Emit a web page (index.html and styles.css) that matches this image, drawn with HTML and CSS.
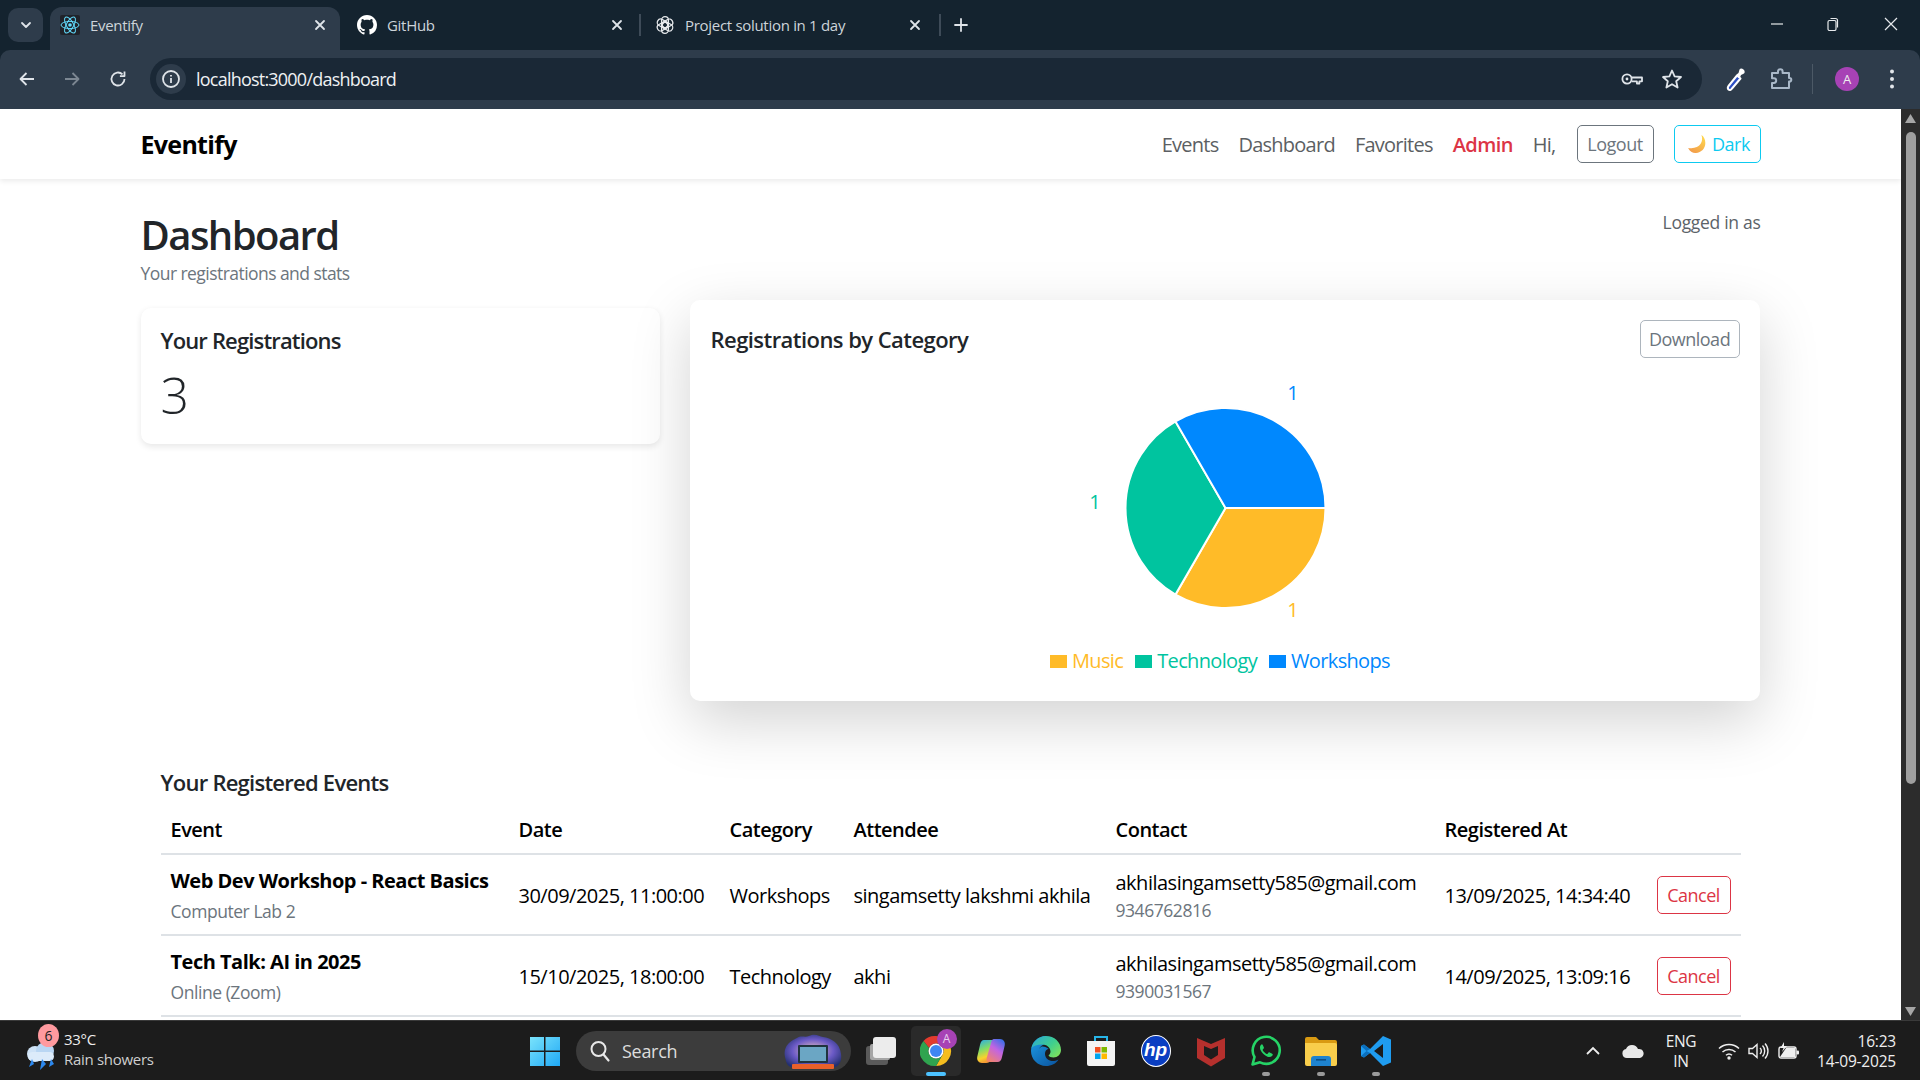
FILE: index.html
```html
<!DOCTYPE html>
<html lang="en">
<head>
<meta charset="utf-8">
<title>Eventify</title>
<link rel="stylesheet" href="styles.css">
</head>
<body>
<div class="screen">
  <header class="browser">
    <div class="tabstrip">
      <button class="tab-menu"><svg width="14" height="14" viewBox="0 0 14 14"><path d="M3 5l4 4 4-4" class="ic-w"/></svg></button>
      <div class="tab tab-active">
        <svg class="fav" width="20" height="20" viewBox="0 0 20 20"><rect width="20" height="20" rx="2" fill="#20232a"/><g fill="none" stroke="#61dafb" stroke-width="1"><ellipse cx="10" cy="10" rx="9" ry="3.6"/><ellipse cx="10" cy="10" rx="9" ry="3.6" transform="rotate(60 10 10)"/><ellipse cx="10" cy="10" rx="9" ry="3.6" transform="rotate(120 10 10)"/></g><circle cx="10" cy="10" r="1.8" fill="#61dafb"/></svg>
        <span class="tab-title">Eventify</span>
        <svg class="tab-x" width="12" height="12" viewBox="0 0 12 12"><path d="M2 2l8 8M10 2l-8 8" class="ic-w"/></svg>
      </div>
      <div class="tab tab-second">
        <svg class="fav" width="20" height="20" viewBox="0 0 16 16"><path fill="#fff" d="M8 0C3.58 0 0 3.58 0 8c0 3.54 2.29 6.53 5.47 7.59.4.07.55-.17.55-.38 0-.19-.01-.82-.01-1.49-2.01.37-2.53-.49-2.69-.94-.09-.23-.48-.94-.82-1.13-.28-.15-.68-.52-.01-.53.63-.01 1.08.58 1.23.82.72 1.21 1.87.87 2.33.66.07-.52.28-.87.51-1.07-1.78-.2-3.64-.89-3.64-3.95 0-.87.31-1.59.82-2.15-.08-.2-.36-1.02.08-2.12 0 0 .67-.21 2.2.82.64-.18 1.32-.27 2-.27.68 0 1.36.09 2 .27 1.53-1.04 2.2-.82 2.2-.82.44 1.1.16 1.92.08 2.12.51.56.82 1.27.82 2.15 0 3.07-1.87 3.75-3.65 3.95.29.25.54.73.54 1.48 0 1.07-.01 1.93-.01 2.2 0 .21.15.46.55.38A8.013 8.013 0 0016 8c0-4.42-3.58-8-8-8z"/></svg>
        <span class="tab-title">GitHub</span>
        <svg class="tab-x" width="12" height="12" viewBox="0 0 12 12"><path d="M2 2l8 8M10 2l-8 8" class="ic-w"/></svg>
      </div>
      <div class="tab-sep"></div>
      <div class="tab tab-third">
        <svg class="fav" width="20" height="20" viewBox="0 0 20 20"><g fill="none" stroke="#e6e9ec" stroke-width="1.3"><rect x="6.6" y="1.6" width="6.8" height="11" rx="3.4"/><rect x="6.6" y="1.6" width="6.8" height="11" rx="3.4" transform="rotate(60 10 10)"/><rect x="6.6" y="1.6" width="6.8" height="11" rx="3.4" transform="rotate(120 10 10)"/><rect x="6.6" y="1.6" width="6.8" height="11" rx="3.4" transform="rotate(180 10 10)"/><rect x="6.6" y="1.6" width="6.8" height="11" rx="3.4" transform="rotate(240 10 10)"/><rect x="6.6" y="1.6" width="6.8" height="11" rx="3.4" transform="rotate(300 10 10)"/></g></svg>
        <span class="tab-title">Project solution in 1 day</span>
        <svg class="tab-x" width="12" height="12" viewBox="0 0 12 12"><path d="M2 2l8 8M10 2l-8 8" class="ic-w"/></svg>
      </div>
      <div class="tab-sep"></div>
      <svg class="tab-plus" width="14" height="14" viewBox="0 0 14 14"><path d="M7 1v12M1 7h12" class="ic-w"/></svg>
      <div class="win-controls">
        <svg width="14" height="14" viewBox="0 0 14 14"><path d="M1 7h12" class="ic-thin"/></svg>
        <svg width="14" height="14" viewBox="0 0 14 14"><rect x="2" y="3.5" width="8" height="10" rx="1.5" class="ic-thin"/><path d="M4.5 1.5h5a2 2 0 012 2v7" class="ic-thin"/></svg>
        <svg class="win-close" width="14" height="14" viewBox="0 0 14 14"><path d="M1 1l12 12M13 1L1 13" class="ic-thin"/></svg>
      </div>
    </div>
    <div class="toolbar">
      <svg class="tb-back" width="20" height="20" viewBox="0 0 20 20"><path d="M17 10H4M9.5 4L3.5 10l6 6" class="ic-t"/></svg>
      <svg class="tb-forward" width="20" height="20" viewBox="0 0 20 20"><path d="M3 10h13M10.5 4l6 6-6 6" class="ic-t ic-dim"/></svg>
      <svg class="tb-reload" width="20" height="20" viewBox="0 0 20 20"><path d="M16.5 10a6.5 6.5 0 11-2-4.7" class="ic-t"/><path d="M16.5 2.5v4.6h-4.6" class="ic-t"/></svg>
      <div class="omnibox">
        <span class="info-chip"><svg width="20" height="20" viewBox="0 0 20 20"><circle cx="10" cy="10" r="8" class="ic-t"/><path d="M10 9v5M10 6v1.4" class="ic-t"/></svg></span>
        <span class="url">localhost:3000/dashboard</span>
        <svg class="omni-key" width="24" height="20" viewBox="0 0 24 20"><circle cx="7" cy="10" r="4.6" class="ic-t"/><circle cx="7" cy="10" r="1.4" fill="#dfe4e9"/><path d="M11.6 8.5H22v3.8h-2.6v2.2h-2.5v-2.2h-5.3" class="ic-t"/></svg>
        <svg class="omni-star" width="22" height="22" viewBox="0 0 22 22"><path d="M11 2.5l2.6 5.9 6.4.6-4.8 4.2 1.4 6.3L11 16.2l-5.6 3.3 1.4-6.3L2 9l6.4-.6z" class="ic-t"/></svg>
      </div>
      <svg class="tb-pen" width="22" height="26" viewBox="0 0 22 26"><path d="M3.500 23.500c-1-1-1-2 0-3.500L12 9.500l3.500 3L7 22.500c-1 1.500-2.500 2-3.500 1z" fill="#2c4fc4" stroke="#fff" stroke-width="2" stroke-linejoin="round"/><path d="M11.500 8.500l2-1.500 1-3.500c.8-1.500 2.500-1.500 4 0s1.500 3 .5 4l-3 1.500-1 2.500z" fill="#fff"/></svg>
      <svg class="tb-ext" width="24" height="24" viewBox="0 0 24 24"><path d="M3 6h6V4.500a2.300 2.300 0 014.600 0V6H20v5h.5a1.800 1.800 0 010 3.600H20V21H3v-5h1.800a2.400 2.400 0 000-4.800H3z" fill="none" stroke="#a9b8c8" stroke-width="2" stroke-linejoin="round"/></svg>
      <div class="tb-sep"></div>
      <span class="avatar">A</span>
      <svg class="tb-dots" width="6" height="22" viewBox="0 0 6 22"><circle cx="3" cy="3.5" r="2" fill="#e2e6ea"/><circle cx="3" cy="11" r="2" fill="#e2e6ea"/><circle cx="3" cy="18.5" r="2" fill="#e2e6ea"/></svg>
    </div>
  </header>

  <div class="viewport">
    <div class="page">
      <nav class="navbar">
        <div class="container nav-inner">
          <a class="brand">Eventify</a>
          <div class="nav-links">
            <a class="nav-link">Events</a>
            <a class="nav-link">Dashboard</a>
            <a class="nav-link">Favorites</a>
            <a class="nav-link nav-admin">Admin</a>
            <span class="nav-link">Hi,</span>
            <button class="btn btn-gray nav-logout">Logout</button>
            <button class="btn btn-cyan nav-theme"><svg width="20" height="20" viewBox="0 0 18 18"><defs><linearGradient id="moon" x1="0.8" y1="0" x2="0.2" y2="1"><stop offset="0" stop-color="#ffd84d"/><stop offset="1" stop-color="#f29a4a"/></linearGradient></defs><path d="M13 1c2.2 6-1.5 12-9.5 11.8-1 0-1.7-.1-2.5-.3 1.5 3.2 4.3 4.7 7 4.5 5-.3 8.5-4.2 8.5-9 0-3-1.400-5.700-3.500-7z" fill="url(#moon)"/></svg>Dark</button>
          </div>
        </div>
      </nav>

      <main class="container main">
        <div class="head-row">
          <div>
            <h1 class="page-title">Dashboard</h1>
            <p class="page-sub">Your registrations and stats</p>
          </div>
          <p class="logged">Logged in as</p>
        </div>

        <div class="cards">
          <section class="card card-stat">
            <h2 class="card-title card-title-stat">Your Registrations</h2>
            <div class="stat-value">3</div>
          </section>
          <section class="card card-chart">
            <div class="chart-head">
              <h2 class="card-title">Registrations by Category</h2>
              <button class="btn btn-light">Download</button>
            </div>
            <svg class="pie" width="1030" height="272" viewBox="0 0 1030 272">
              <g stroke="#fff" stroke-width="2">
                <path d="M514.500 138 L614.500 138 A100 100 0 0 1 464.500 224.600 Z" fill="#FFBB28"/>
                <path d="M514.500 138 L464.500 224.600 A100 100 0 0 1 464.500 51.400 Z" fill="#00C49F"/>
                <path d="M514.500 138 L464.500 51.400 A100 100 0 0 1 614.500 138 Z" fill="#0088FE"/>
              </g>
              <text x="582" y="30" class="pie-label pl-blue">1</text>
              <text x="384" y="139" class="pie-label pl-teal">1</text>
              <text x="582" y="247" class="pie-label pl-yellow">1</text>
            </svg>
            <div class="legend">
              <span class="legend-item lg-yellow"><i class="swatch"></i>Music</span>
              <span class="legend-item lg-teal"><i class="swatch"></i>Technology</span>
              <span class="legend-item lg-blue"><i class="swatch"></i>Workshops</span>
            </div>
          </section>
        </div>

        <section class="events">
          <h2 class="card-title events-title">Your Registered Events</h2>
          <table class="table">
            <colgroup>
              <col class="c1"><col class="c2"><col class="c3"><col class="c4"><col class="c5"><col class="c6"><col class="c7">
            </colgroup>
            <thead>
              <tr><th>Event</th><th>Date</th><th>Category</th><th>Attendee</th><th>Contact</th><th>Registered At</th><th></th></tr>
            </thead>
            <tbody>
              <tr>
                <td><div class="ev-name">Web Dev Workshop - React Basics</div><div class="muted ev-sub">Computer Lab 2</div></td>
                <td>30/09/2025, 11:00:00</td>
                <td>Workshops</td>
                <td>singamsetty lakshmi akhila</td>
                <td><div>akhilasingamsetty585@gmail.com</div><div class="muted">9346762816</div></td>
                <td>13/09/2025, 14:34:40</td>
                <td class="td-action"><button class="btn btn-red">Cancel</button></td>
              </tr>
              <tr>
                <td><div class="ev-name">Tech Talk: AI in 2025</div><div class="muted ev-sub">Online (Zoom)</div></td>
                <td>15/10/2025, 18:00:00</td>
                <td>Technology</td>
                <td>akhi</td>
                <td><div>akhilasingamsetty585@gmail.com</div><div class="muted">9390031567</div></td>
                <td>14/09/2025, 13:09:16</td>
                <td class="td-action"><button class="btn btn-red">Cancel</button></td>
              </tr>
            </tbody>
          </table>
        </section>
      </main>
    </div>
    <div class="scrollbar">
      <svg width="19" height="20" viewBox="0 0 19 20"><path d="M9.500 5l5.500 9H4z" fill="#a6a6a6"/></svg>
      <div class="thumb"></div>
      <svg class="arrow-down" width="19" height="18" viewBox="0 0 19 18"><path d="M9.500 14L4 5h11z" fill="#a6a6a6"/></svg>
    </div>
  </div>

  <footer class="taskbar">
    <div class="tb-weather">
      <div class="wx-icon">
        <svg width="38" height="34" viewBox="0 0 38 34"><circle cx="13" cy="17" r="8" fill="#cfe3f7"/><circle cx="23" cy="14" r="9" fill="#b9d6f3"/><rect x="6" y="15" width="26" height="9" rx="4.500" fill="#dcebfa"/><path d="M10 22l-3 8 5-3zM20 22l-2 11 6-6zM29 22l-2 8 5-3z" fill="#2c88ee"/></svg>
        <span class="wx-badge">6</span>
      </div>
      <div class="wx-text"><div>33°C</div><div class="wx-sub">Rain showers</div></div>
    </div>
    <svg class="win-logo" width="30" height="30" viewBox="0 0 30 30"><defs><linearGradient id="w1" x1="0" y1="0" x2="1" y2="1"><stop offset="0" stop-color="#7ae3fb"/><stop offset="1" stop-color="#1fa8f5"/></linearGradient></defs><path fill="url(#w1)" d="M0 1h14v13.500H0zM15.500 1H30v13.500H15.500zM0 16h14v14H0zM15.500 16H30v14H15.500z"/></svg>
    <div class="search">
      <svg width="24" height="24" viewBox="0 0 24 24"><circle cx="10.500" cy="10" r="7" fill="none" stroke="#e8e8e8" stroke-width="2"/><path d="M15.500 15.500l5 6" stroke="#e8e8e8" stroke-width="2.200" stroke-linecap="round"/></svg>
      <span class="search-text">Search</span>
      <svg class="search-art" width="60" height="36" viewBox="0 0 60 36"><defs><radialGradient id="sa" cx="0.500" cy="0.500" r="0.600"><stop offset="0" stop-color="#f3c7c0"/><stop offset="0.600" stop-color="#6b5ac6"/><stop offset="1" stop-color="#23306f"/></radialGradient></defs><path d="M2 24C0 12 8 8 14 5c4-3 8 0 12-2 6-3 10 0 14 1 8 1 17 6 18 17 1 6-1 11-5 13H8C4 33 3 29 2 24z" fill="url(#sa)"/><rect x="15" y="12" width="30" height="18" rx="1" fill="#20343f"/><rect x="17" y="14" width="26" height="14" fill="#6ba6c4"/><rect x="9" y="31" width="42" height="5" rx="1" fill="#e8602a"/></svg>
    </div>
    <div class="tb-apps">
      <span class="app"><svg width="32" height="30" viewBox="0 0 32 30"><rect x="1" y="10" width="22" height="19" rx="3" fill="#5a5a5a"/><rect x="5" y="8" width="20" height="16" rx="2" fill="#a4a4a4"/><rect x="8" y="1" width="23" height="21" rx="3" fill="#ececec"/></svg></span>
      <span class="app app-active">
        <svg width="32" height="32" viewBox="0 0 32 32"><path d="M16 1a15 15 0 0113 7.500H16a7.500 7.500 0 00-6.900 4.500L3.500 6A15 15 0 0116 1z" fill="#e33b2e"/><path d="M29 8.500A15 15 0 0116 31l6.500-11.300A7.500 7.500 0 0022.500 12z" fill="#f5bd1f"/><path d="M3.500 6A15 15 0 0016 31l6.500-11.300a7.500 7.500 0 01-13.400-6.700z" fill="#2fa44f"/><circle cx="16" cy="16" r="7.500" fill="#fff"/><circle cx="16" cy="16" r="6" fill="#3f86f2"/></svg>
        <span class="chrome-badge">A</span>
        <i class="run run-blue"></i>
      </span>
      <span class="app"><svg width="30" height="30" viewBox="0 0 30 30"><defs><linearGradient id="cp1" x1="0" y1="0" x2="0.300" y2="1"><stop offset="0" stop-color="#27a9ee"/><stop offset="0.450" stop-color="#7fdc6a"/><stop offset="0.800" stop-color="#f8d22d"/><stop offset="1" stop-color="#f59a35"/></linearGradient><linearGradient id="cp2" x1="0.800" y1="0" x2="0.200" y2="1"><stop offset="0" stop-color="#3c6fe8"/><stop offset="0.450" stop-color="#c264e2"/><stop offset="1" stop-color="#f2846b"/></linearGradient></defs><path d="M8 4h8c3 0 4 1.500 3.300 4L15 23c-.9 3-2.500 4-5 4H6c-3.500 0-5.500-3-4.700-6.500L4 9c.7-3.200 2-5 4-5z" fill="url(#cp1)"/><path d="M18 3h6c3.500 0 5.500 3 4.700 6.500L26 21c-.7 3.200-2 5-4.500 5H14c-3 0-4-1.500-3.300-4L15 7c.6-2.500 1.500-4 3-4z" fill="url(#cp2)"/></svg></span>
      <span class="app"><svg width="32" height="32" viewBox="0 0 32 32"><defs><linearGradient id="ed1" x1="0" y1="0" x2="1" y2="0.800"><stop offset="0" stop-color="#2aa6d9"/><stop offset="0.600" stop-color="#3fcf8e"/><stop offset="1" stop-color="#7de05c"/></linearGradient><linearGradient id="ed2" x1="0" y1="0" x2="0.800" y2="1"><stop offset="0" stop-color="#1e9fe8"/><stop offset="1" stop-color="#0c59a4"/></linearGradient></defs><path d="M16 1C7.700 1 1 7.700 1 16s6.700 15 15 15c5.500 0 10-2.300 12.500-6.500-3 1.700-6 1.800-8 1.300-3.200-.8-5.500-3.800-5.500-7 0-2.500 1.300-4.300 3.500-5C15.500 12 13 11 11 12c-2 1-3 3-3 6 0-5 4-9 9-9z" fill="url(#ed2)"/><path d="M1.500 13C3.300 6 9 1 16 1c8.300 0 15 6.200 15 14 0 4.500-3.500 7.500-7.500 7.500-2.500 0-4.500-.8-5-2 1.200-1 2-2.300 2-3.800 0-4.500-4-7.200-8.500-7.200C7 9.500 3.300 10.800 1.500 13z" fill="url(#ed1)"/></svg></span>
      <span class="app"><svg width="30" height="32" viewBox="0 0 30 32"><path d="M9 7V2h12v5" fill="none" stroke="#27b5e8" stroke-width="2"/><path d="M1 6h28v23a2 2 0 01-2 2H3a2 2 0 01-2-2z" fill="#f4f4f4"/><rect x="9" y="12" width="5.500" height="5.500" fill="#f25022"/><rect x="15.500" y="12" width="5.500" height="5.500" fill="#7fba00"/><rect x="9" y="18.500" width="5.500" height="5.500" fill="#00a4ef"/><rect x="15.500" y="18.500" width="5.500" height="5.500" fill="#ffb900"/></svg></span>
      <span class="app"><span class="hp-logo">hp</span></span>
      <span class="app"><svg width="28" height="32" viewBox="0 0 28 32"><path d="M0 3l14 6 14-6v20l-14 8.500L0 23z" fill="#b5302d"/><path d="M7 11l7 3 7-3v9l-7 4.500L7 20z" fill="#1c1c1c"/></svg></span>
      <span class="app"><svg width="32" height="32" viewBox="0 0 32 32"><path d="M2.500 29.500l2-7.500a13.500 13.500 0 115.500 5.300z" fill="none" stroke="#25d366" stroke-width="2.600" stroke-linejoin="round"/><path d="M11.500 9.500c-1.500 1-2 3-1 5.500 1.500 3 4 5.500 7 6.700 2.500.8 4.500 0 5.200-1.700.3-.9-.2-1.200-1-1.600l-2-1c-.6-.2-1-.1-1.300.4l-.8 1c-.3.300-.6.300-1 .1-1.600-.8-2.900-2-3.800-3.600-.2-.4-.1-.7.200-1l.7-.9c.3-.4.300-.7.100-1.200l-.9-2c-.4-.8-.9-1-1.400-.7z" fill="#25d366"/></svg><i class="run"></i></span>
      <span class="app"><svg width="32" height="30" viewBox="0 0 32 30"><path d="M0 3a2 2 0 012-2h9l3 3h16a2 2 0 012 2v4H0z" fill="#d99a12"/><path d="M0 7h30a2 2 0 012 2v19a2 2 0 01-2 2H2a2 2 0 01-2-2z" fill="#f9ce4c"/><path d="M6 30v-7a3 3 0 013-3h14a3 3 0 013 3v7z" fill="#1e83cf"/><rect x="11" y="23" width="10" height="1.600" fill="#0c4f87"/></svg><i class="run"></i></span>
      <span class="app"><svg width="32" height="32" viewBox="0 0 32 32"><path d="M23 1L10 14 4 9.500 1 11v10l3 1.500L10 18l13 13 8-3.500V4.500zM23 9v14l-9-7z" fill="#1f9cf0" fill-rule="evenodd"/><path d="M1 11l3-1.500 6 4.500-3.500 2zM1 21l3 1.500 6-4.500-3.500-2z" fill="#0b6fbd"/></svg><i class="run"></i></span>
    </div>
    <div class="tray">
      <svg class="tray-chev" width="16" height="10" viewBox="0 0 16 10"><path d="M2 8l6-6 6 6" fill="none" stroke="#eee" stroke-width="1.800"/></svg>
      <svg class="tray-cloud" width="22" height="14" viewBox="0 0 22 14"><path d="M5 14a4.500 4.500 0 01-1-8.900A6.500 6.500 0 0116 5a4.500 4.500 0 012 9z" fill="#e8e8e8"/></svg>
      <div class="tray-lang"><div>ENG</div><div>IN</div></div>
      <svg class="tray-wifi" width="22" height="18" viewBox="0 0 22 18"><path d="M1 6.500a14.500 14.500 0 0120 0M4.500 10a9.500 9.500 0 0113 0M8 13.300a4.500 4.500 0 016 0" fill="none" stroke="#eee" stroke-width="1.500"/><circle cx="11" cy="16" r="1.700" fill="#eee"/></svg>
      <svg class="tray-vol" width="22" height="18" viewBox="0 0 22 18"><path d="M1 6.500h3.500L9 2.500v13l-4.500-4H1z" fill="none" stroke="#eee" stroke-width="1.400"/><path d="M12 6a4 4 0 010 6M14.500 3.500a8 8 0 010 11M17 1.500a11 11 0 010 15" fill="none" stroke="#eee" stroke-width="1.400"/></svg>
      <svg class="tray-batt" width="22" height="18" viewBox="0 0 22 18"><rect x="1" y="5" width="17" height="11" rx="2" fill="none" stroke="#eee" stroke-width="1.400"/><path d="M2 15l6-9h9v9z" fill="#eee"/><rect x="18.500" y="8.500" width="2.500" height="4" rx="1" fill="#eee"/><path d="M6 0L2.500 6h3L4 10l5-6H6z" fill="#eee"/></svg>
      <div class="tray-clock"><div>16:23</div><div>14-09-2025</div></div>
    </div>
  </footer>
</div>
</body>
</html>
```

FILE: styles.css
```css
* { box-sizing: border-box; }
html, body { margin: 0; height: 100%; overflow: hidden; }
body { font-family: "Open Sans", "Noto Sans", "Liberation Sans", sans-serif; font-size: 20px; color: #212529; background: #fff; letter-spacing: -0.5px; }
h1, h2, p { margin: 0; }
button { font: inherit; letter-spacing: inherit; background: none; cursor: pointer; }

.screen { display: flex; flex-direction: column; width: 1920px; height: 1080px; }

/* browser chrome */
.ic-w { fill: none; stroke: #dfe4e9; stroke-width: 1.8; stroke-linecap: round; stroke-linejoin: round; }
.ic-thin { fill: none; stroke: #e6e9ec; stroke-width: 1.2; }
.ic-t { fill: none; stroke: #dfe4e9; stroke-width: 1.800; stroke-linejoin: round; }
.ic-dim { stroke: #7c8792; }
.browser { flex: none; height: 109px; background: #14232f; color: #dfe4e9; }
.tabstrip { display: flex; align-items: flex-end; height: 50px; font-size: 15px; letter-spacing: -0.3px; }
.tab-menu { width: 35px; height: 34px; margin: 0 7px 8px 8px; padding: 0; border: 0; border-radius: 10px; background: #2e3c4b; display: flex; align-items: center; justify-content: center; }
.tab { display: flex; align-items: center; height: 43px; padding-bottom: 8px; flex: none; }
.tab-active { width: 290px; padding: 0 14px 8px 10px; background: #2e3c4b; border-radius: 12px 12px 0 0; }
.tab-second { width: 299px; padding: 0 16px 8px 17px; }
.tab-third { width: 298px; padding: 0 18px 8px 14px; }
.tab-title { margin-left: 10px; flex: 1; color: #cdd4da; }
.tab-x { flex: none; }
.tab-sep { width: 2px; height: 22px; margin-bottom: 14px; background: #3e4b58; flex: none; }
.tab-plus { margin: 0 0 18px 13px; flex: none; }
.win-controls { display: flex; gap: 42px; margin: 0 22px 19px auto; }
.win-close { margin-left: 2px; }
.toolbar { display: flex; align-items: center; height: 59px; padding-bottom: 1px; background: #2e3c4b; border-radius: 10px 10px 0 0; }
.tb-back { margin-left: 17px; flex: none; }
.tb-forward { margin-left: 25px; flex: none; }
.tb-reload { margin-left: 26px; flex: none; }
.omnibox { display: flex; align-items: center; width: 1552px; height: 42px; margin-left: 22px; border-radius: 21px; background: #1a2836; flex: none; }
.info-chip { display: flex; align-items: center; justify-content: center; width: 30px; height: 30px; margin-left: 6px; border-radius: 50%; background: #2e3c4b; flex: none; }
.url { margin-left: 10px; font-size: 18px; letter-spacing: -0.78px; color: #eef1f3; flex: 1; }
.omni-key { margin-right: 17px; flex: none; }
.omni-star { margin-right: 19px; flex: none; }
.tb-pen { margin-left: 23px; flex: none; }
.tb-ext { margin-left: 22px; flex: none; }
.tb-sep { width: 1px; height: 30px; margin-left: 19px; background: #4c5966; flex: none; }
.avatar { display: flex; align-items: center; justify-content: center; width: 24px; height: 24px; margin-left: 22px; border-radius: 50%; background: #a742b5; color: #eee; font-size: 13px; letter-spacing: 0; flex: none; }
.tb-dots { margin-left: 30px; flex: none; }

/* viewport */
.viewport { flex: 1; display: flex; min-height: 0; }
.page { flex: 1; min-width: 0; overflow: hidden; background: #fff; }
.scrollbar { flex: none; width: 19px; display: flex; flex-direction: column; align-items: center; background: #2c2c2c; }
.thumb { width: 10px; height: 652px; margin-top: 3px; border-radius: 5px; background: #9f9f9f; }
.arrow-down { margin-top: auto; }

.container { width: 1650px; margin: 0 auto; padding: 0 15px; }
.navbar { height: 70px; background: #fff; box-shadow: 0 2.5px 5px rgba(0,0,0,.075); position: relative; }
.nav-inner { display: flex; align-items: center; justify-content: space-between; height: 70px; }
.brand { font-size: 25px; font-weight: 700; color: #000; letter-spacing: -0.7px; }
.nav-links { display: flex; align-items: center; }
.nav-link { margin-right: 20px; color: #5c5f63; letter-spacing: -0.75px; }
.nav-admin { font-weight: 600; color: #dc3545; letter-spacing: -0.6px; }
.btn { height: 38px; padding: 0 9px; border: 1px solid #6c757d; border-radius: 5px; color: #6c757d; font-size: 18px; display: inline-flex; align-items: center; justify-content: center; }
.nav-logout { width: 77px; height: 38px; margin-left: 1px; }
.nav-theme { width: 87px; margin-left: 20px; padding: 0 0 0 3px; border-color: #0dcaf0; color: #0dcaf0; gap: 5px; }
.btn-light { width: 100px; border-color: #adb5bd; }
.btn-red { width: 74px; border-color: #dc3545; color: #dc3545; }

.main { padding-top: 32px; }
.head-row { display: flex; justify-content: space-between; align-items: flex-start; }
.page-title { font-size: 40px; font-weight: 600; line-height: 48px; letter-spacing: -1.55px; color: #212529; }
.page-sub { margin-top: 2px; font-size: 17.5px; line-height: 25px; color: #6c757d; letter-spacing: -0.55px; }
.logged { margin-top: -1px; font-size: 17.5px; line-height: 25px; color: #5c6369; letter-spacing: -0.3px; }

.cards { display: flex; justify-content: space-between; align-items: flex-start; margin-top: 22px; padding-right: 1px; }
.card { background: #fff; border-radius: 10px; }
.card-stat { width: 519px; height: 136px; padding: 18px 20px 20px; box-shadow: 0 2.5px 6px rgba(0,0,0,.09); }
.card-title { font-size: 22px; font-weight: 600; line-height: 28px; letter-spacing: -0.55px; color: #212529; }
.card-title-stat { letter-spacing: -0.85px; }
.stat-value { margin-top: 11px; font-size: 50px; line-height: 60px; font-weight: 300; }
.card-chart { width: 1070px; height: 401px; margin-top: -8px; padding: 20px 20px 20px 21px; box-shadow: 0 20px 60px rgba(0,0,0,.175); }
.chart-head { display: flex; justify-content: space-between; align-items: center; }
.pie { display: block; margin-top: 12px; }
.pie-label { font-family: "Open Sans", sans-serif; font-size: 20px; text-anchor: middle; letter-spacing: 0; }
.pl-blue { fill: #0088FE; }
.pl-teal { fill: #00C49F; }
.pl-yellow { fill: #FFBB28; }
.legend { display: flex; justify-content: center; gap: 12px; margin-top: 5px; padding-right: 10px; line-height: 28px; letter-spacing: -0.65px; }
.legend-item { display: inline-flex; align-items: center; gap: 5px; }
.swatch { display: block; width: 17px; height: 13px; background: currentColor; }
.lg-yellow { color: #FFBB28; }
.lg-teal { color: #00C49F; }
.lg-blue { color: #0088FE; }

.events { margin-top: 66px; padding: 0 20px; }
.events-title { line-height: 30px; font-size: 22px; letter-spacing: -0.75px; }
.table { width: 1580px; margin-top: 9px; border-collapse: collapse; table-layout: fixed; color: #000; }
.c1 { width: 348px; }
.c2 { width: 211px; }
.c3 { width: 124px; }
.c4 { width: 262px; }
.c5 { width: 329px; }
.c6 { width: 212px; }
.c7 { width: 94px; }
.table th { height: 48px; padding: 0 10px; text-align: left; font-weight: 600; border-bottom: 2px solid #dee2e6; white-space: nowrap; }
.table td { height: 81px; padding: 2px 10px 0; border-bottom: 2px solid #dee2e6; white-space: nowrap; line-height: 28px; }
.table .td-action { padding-top: 0; }
.ev-name { font-weight: 700; margin-top: -1px; }
.ev-sub { margin-top: 3px; }
.muted { font-size: 17.500px; color: #6c757d; line-height: 26px; letter-spacing: -0.45px; }

/* taskbar */
.taskbar { flex: none; display: flex; align-items: center; height: 60px; border-top: 1px solid #3a3a3a; background: #1c1c1c; color: #eee; font-size: 15px; letter-spacing: -0.3px; }
.tb-weather { display: flex; align-items: center; width: 530px; padding-left: 22px; flex: none; }
.wx-icon { position: relative; width: 38px; height: 34px; margin-top: 6px; }
.wx-badge { position: absolute; top: -13px; left: 16px; width: 21px; height: 23px; border-radius: 50%; background: #ff9a9f; color: #222; font-size: 14px; text-align: center; line-height: 23px; letter-spacing: 0; }
.wx-text { margin-left: 4px; margin-top: -3px; line-height: 20px; }
.wx-sub { color: #cfcfcf; }
.win-logo { flex: none; margin-top: 1px; }
.search { display: flex; align-items: center; width: 275px; height: 40px; margin-left: 16px; padding: 0 8px 0 12px; border-radius: 20px; background: #3c3c3c; flex: none; }
.search-text { margin-left: 10px; font-size: 18px; color: #ddd; flex: 1; }
.search-art { flex: none; }
.tb-apps { display: flex; margin-left: 2px; flex: none; }
.app { position: relative; display: flex; align-items: center; justify-content: center; width: 55px; height: 50px; flex: none; }
.app-active { width: 50px; margin: 0 2.5px; border-radius: 5px; background: #2a2a2a; }
.chrome-badge { position: absolute; top: 3px; right: 4px; width: 20px; height: 20px; border-radius: 50%; background: #a742b5; color: #e8cfee; font-size: 12px; line-height: 20px; text-align: center; letter-spacing: 0; }
.run { position: absolute; bottom: 0; left: 50%; width: 8px; height: 4px; margin-left: -4px; border-radius: 2px; background: #9a9a9a; }
.run-blue { width: 20px; margin-left: -10px; background: #4cc2ff; }
.hp-logo { display: block; width: 30px; height: 32px; border-radius: 50%; border: 1.5px solid #fff; background: #0a3ec2; color: #fff; font: italic 700 19px/27px "Liberation Sans", sans-serif; text-align: center; letter-spacing: 0; }
.tray { display: flex; align-items: center; flex: 1; font-size: 15.500px; }
.tray-chev { margin-left: 182px; flex: none; }
.tray-cloud { margin-left: 21px; flex: none; }
.tray-lang { width: 44px; margin-left: 15px; text-align: center; line-height: 20px; }
.tray-wifi { margin-left: 15px; flex: none; }
.tray-vol { margin-left: 8px; flex: none; }
.tray-batt { margin-left: 8px; flex: none; }
.tray-clock { margin-left: auto; padding-right: 24px; text-align: right; line-height: 20px; letter-spacing: -0.2px; }
```
